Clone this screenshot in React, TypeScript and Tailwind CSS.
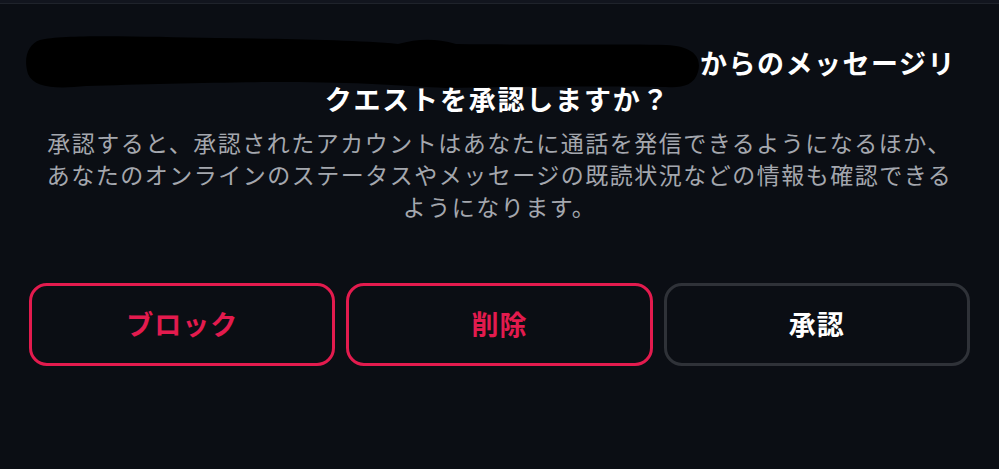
import React from "react";

const jp = { fontFamily: '"Noto Sans CJK JP", "Noto Sans", sans-serif' };

function Scribble() {
  return (
    <svg width="676" height="54" viewBox="0 0 676 54" className="inline-block align-middle shrink-0" aria-hidden>
      <path
        d="M14 4 C40 -2 120 1 190 2 C260 3 330 4 372 8 C392 3 408 2 430 8 C520 9 600 8 640 9 C668 10 676 22 672 36 C668 50 655 52 640 51 C560 50 480 51 420 52 C380 50 330 46 260 46 C200 46 120 48 60 50 C30 53 8 52 2 38 C-3 22 2 8 14 4 Z"
        fill="#000"
      />
    </svg>
  );
}

export default function App() {
  return (
    <div className="w-[999px] h-[469px] bg-[#0b0e14] overflow-hidden flex flex-col" style={jp}>
      <div className="h-[3px] bg-[#12151e]" />
      <div className="h-px bg-[#1f232b]" />
      <div className="flex flex-col items-center pt-[41px]">
        <div className="flex items-center h-[36px] w-full pl-[26px] text-white font-bold text-[27px] tracking-[1.5px]">
          <Scribble />
          <span className="ml-[-2px]">からのメッセージリ</span>
        </div>
        <div className="h-[36px] flex items-center text-white font-bold text-[27px] tracking-[1.8px] mr-[4px]">
          クエストを承認しますか？
        </div>
        <div className="mt-[9px] text-center text-[#a4a7ae] text-[23px] leading-[32px] tracking-[1.5px]">
          <div>承認すると、承認されたアカウントはあなたに通話を発信できるようになるほか、</div>
          <div>あなたのオンラインのステータスやメッセージの既読状況などの情報も確認できる</div>
          <div>ようになります。</div>
        </div>
      </div>
      <div className="mt-[61px] px-[29px] grid grid-cols-3 gap-[11px]">
        <button className="h-[83px] rounded-[18px] border-[3px] border-[#e31b4e] text-[#e31b4e] font-bold text-[27px] tracking-[1px]">
          ブロック
        </button>
        <button className="h-[83px] rounded-[18px] border-[3px] border-[#e31b4e] text-[#e31b4e] font-bold text-[27px] tracking-[1px]">
          削除
        </button>
        <button className="h-[83px] rounded-[18px] border-[3px] border-[#2f3238] text-white font-bold text-[27px] tracking-[1px]">
          承認
        </button>
      </div>
    </div>
  );
}
